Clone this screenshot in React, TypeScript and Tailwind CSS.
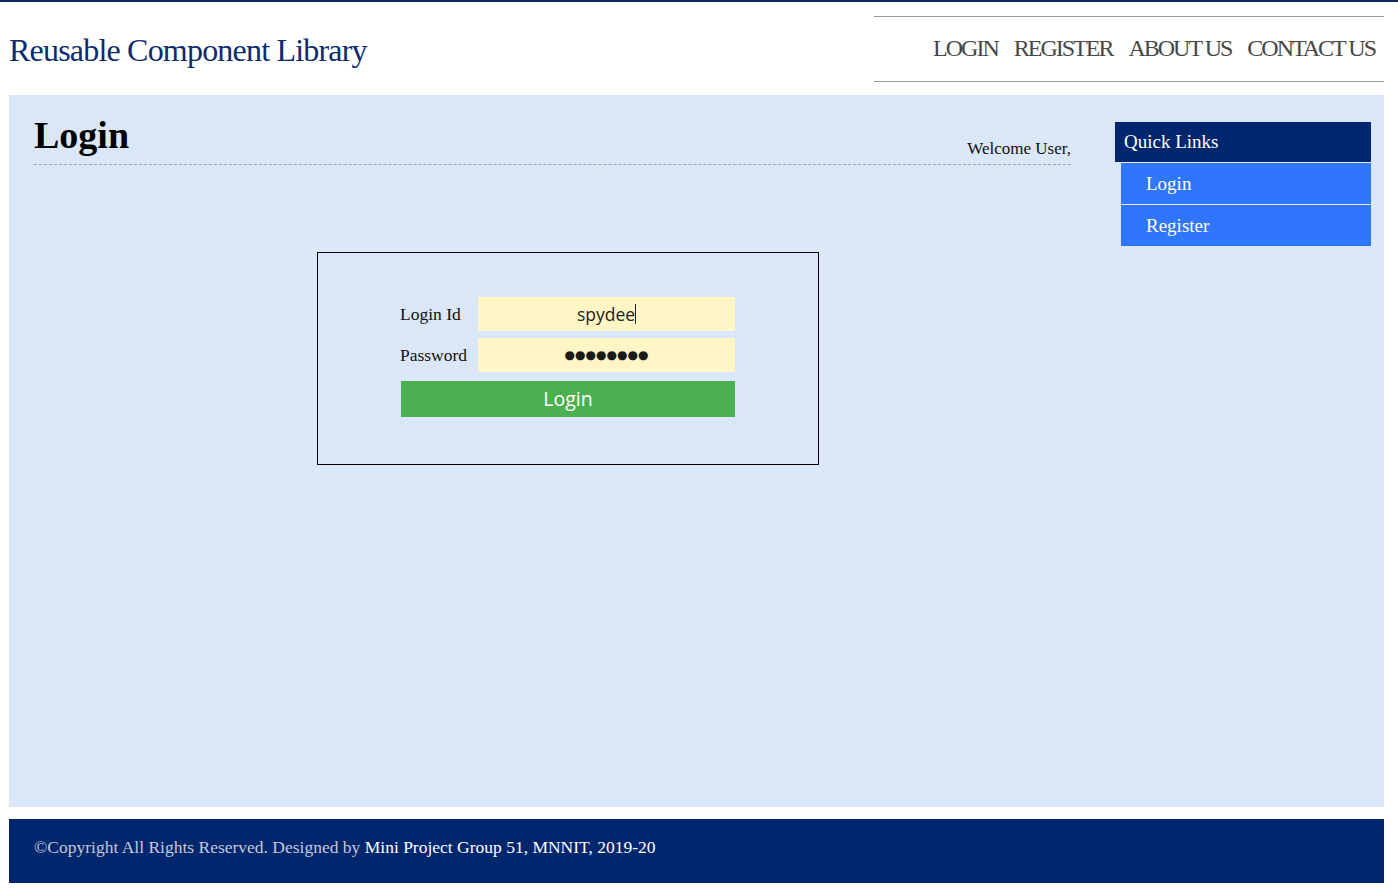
const serif = { fontFamily: '"Liberation Serif", "Times New Roman", serif' };
const sans = { fontFamily: '"Open Sans", "DejaVu Sans", sans-serif' };

const navItems = ["LOGIN", "REGISTER", "ABOUT US", "CONTACT US"];

function Header() {
  return (
    <header className="flex justify-between items-start h-[93px] pt-[14px] pl-[9px] pr-[14px]">
      <h1 className="mt-[16px] text-[32px] leading-[37px] tracking-[-0.8px] text-[#0d2b6e]">
        Reusable Component Library
      </h1>
      <nav className="flex items-center justify-end gap-[16px] w-[510px] h-[66px] border-y border-[#9a9a9a] pr-[9px] pb-[2px]">
        {navItems.map((item) => (
          <a key={item} href="#" className="text-[24px] leading-[28px] tracking-[-2px] text-[#474747]">
            {item}
          </a>
        ))}
      </nav>
    </header>
  );
}

function LoginForm() {
  return (
    <div className="ml-[283px] mt-[87px] w-[502px] h-[213px] border border-black pt-[44px] pl-[82px]">
      <div className="grid grid-cols-[78px_257px] gap-y-[7px] items-center">
        <label className="text-[17.5px] text-[#111]">Login Id</label>
        <div className="h-[34px] bg-[#fff5c5] flex items-center justify-center text-[17.5px] text-[#222]" style={sans}>
          spydee
          <span className="inline-block w-px h-[20px] bg-[#222]" />
        </div>
        <label className="text-[17.5px] text-[#111]">Password</label>
        <div className="h-[34px] bg-[#fff5c5] flex items-center justify-center text-[12px] text-[#1a1a1a]" style={{ fontFamily: '"DejaVu Sans", sans-serif' }}>
          ●●●●●●●●
        </div>
      </div>
      <button className="mt-[9px] ml-[1px] w-[334px] h-[36px] bg-[#4caf50] text-white text-[19.5px]" style={sans}>
        Login
      </button>
    </div>
  );
}

function QuickLinks() {
  return (
    <aside className="w-[256px] mt-[9px]">
      <div className="h-[40px] bg-[#00266e] text-white text-[19px] leading-[40px] pl-[9px]">Quick Links</div>
      <ul className="ml-[6px]">
        {["Login", "Register"].map((l) => (
          <li key={l} className="h-[42px] border-t border-[#e8eefc] bg-[#2f76fc] text-white text-[19px] leading-[41px] pl-[25px]">
            {l}
          </li>
        ))}
      </ul>
    </aside>
  );
}

export default function App() {
  return (
    <div className="min-h-[890px] bg-white border-t-2 border-[#0a2a5c]" style={serif}>
      <Header />
      <main className="ml-[9px] mr-[14px] h-[712px] bg-[#dae7f8] flex pt-[18px] pl-[25px]">
        <section className="w-[1037px]">
          <div className="flex justify-between items-end border-b border-dashed border-[#9aa3ad] pb-[7px]">
            <h2 className="text-[38px] leading-[44px] font-bold text-black">Login</h2>
            <span className="text-[17px] leading-[20px] text-[#111] -mb-[2px]">Welcome User,</span>
          </div>
          <LoginForm />
        </section>
        <div className="ml-[44px]">
          <QuickLinks />
        </div>
      </main>
      <footer className="mt-[12px] ml-[9px] mr-[14px] h-[64px] bg-[#00266e] flex items-center pl-[25px] pb-[8px] text-[17.5px]">
        <span className="text-[#c3c9d9]">©Copyright All Rights Reserved. Designed by&nbsp;</span>
        <span className="text-white">Mini Project Group 51, MNNIT, 2019-20</span>
      </footer>
    </div>
  );
}
